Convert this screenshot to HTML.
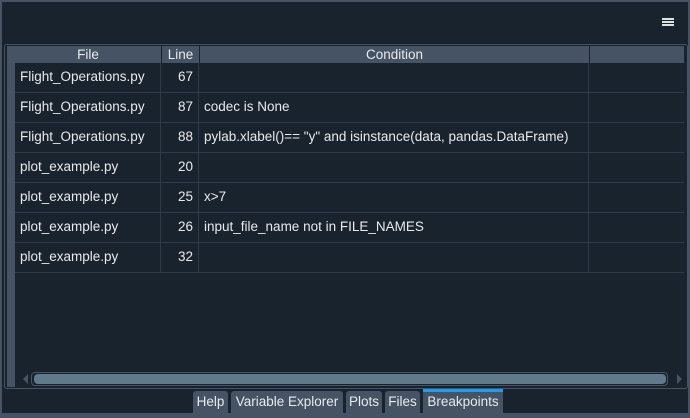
<!DOCTYPE html>
<html><head><style>
*{margin:0;padding:0;box-sizing:border-box}
body{width:690px;height:418px;background:#19232d;font-family:"Liberation Sans",Arial,sans-serif;font-size:13.5px;color:#e8e9eb;position:relative;overflow:hidden}
.ab{position:absolute}
.cell{position:absolute;height:30px;line-height:28px;white-space:nowrap}
.tab{position:absolute;top:391px;height:22px;background:#455364;color:#e8e9eb;border-radius:3px 3px 0 0;line-height:21px;text-align:center;font-size:13.5px;white-space:nowrap}
</style></head><body>
<div class="ab" style="left:0;top:0;width:690px;height:2px;background:#455364"></div>
<div class="ab" style="left:0;top:0;width:2px;height:418px;background:#455364"></div>
<div class="ab" style="right:0;top:0;width:2px;height:418px;background:#455364"></div>
<div class="ab" style="left:0;top:413px;width:690px;height:5px;background:#455364"></div>
<div class="ab" style="left:662px;top:18px;width:12px;height:2px;background:#e0e1e3"></div>
<div class="ab" style="left:662px;top:21px;width:12px;height:2px;background:#e0e1e3"></div>
<div class="ab" style="left:662px;top:24px;width:12px;height:2px;background:#e0e1e3"></div>
<div class="ab" style="left:4px;top:44px;width:684px;height:345px;border:1px solid #455364;border-radius:3px"></div>
<div class="ab" style="left:7px;top:46px;width:8px;height:341px;background:#455364"></div>
<div class="ab" style="left:7px;top:46px;width:677px;height:17px;background:#455364"></div>
<div class="ab" style="left:15px;top:46px;width:146px;height:17px;text-align:center;line-height:17px">File</div>
<div class="ab" style="left:161px;top:46px;width:38px;height:17px;text-align:center;line-height:17px;border-left:1px solid #19232d">Line</div>
<div class="ab" style="left:199px;top:46px;width:390px;height:17px;text-align:center;line-height:17px;border-left:1px solid #19232d">Condition</div>
<div class="ab" style="left:589px;top:46px;width:1px;height:17px;background:#19232d"></div>
<div class="ab" style="left:160px;top:63px;width:1px;height:209px;background:#2d3a48"></div>
<div class="ab" style="left:198px;top:63px;width:1px;height:209px;background:#2d3a48"></div>
<div class="ab" style="left:588px;top:63px;width:1px;height:209px;background:#2d3a48"></div>
<div class="ab" style="left:15px;top:92px;width:669px;height:1px;background:#2d3a48"></div>
<div class="ab" style="left:15px;top:122px;width:669px;height:1px;background:#2d3a48"></div>
<div class="ab" style="left:15px;top:152px;width:669px;height:1px;background:#2d3a48"></div>
<div class="ab" style="left:15px;top:182px;width:669px;height:1px;background:#2d3a48"></div>
<div class="ab" style="left:15px;top:212px;width:669px;height:1px;background:#2d3a48"></div>
<div class="ab" style="left:15px;top:242px;width:669px;height:1px;background:#2d3a48"></div>
<div class="ab" style="left:15px;top:272px;width:669px;height:1px;background:#2d3a48"></div>
<div class="cell" style="left:20px;top:63px">Flight_Operations.py</div><div class="cell" style="left:161px;width:32px;text-align:right;top:63px">67</div>
<div class="cell" style="left:20px;top:93px">Flight_Operations.py</div><div class="cell" style="left:161px;width:32px;text-align:right;top:93px">87</div><div class="cell" style="left:204px;top:93px">codec is None</div>
<div class="cell" style="left:20px;top:123px">Flight_Operations.py</div><div class="cell" style="left:161px;width:32px;text-align:right;top:123px">88</div><div class="cell" style="left:204px;top:123px">pylab.xlabel()== "y" and isinstance(data, pandas.DataFrame)</div>
<div class="cell" style="left:20px;top:153px">plot_example.py</div><div class="cell" style="left:161px;width:32px;text-align:right;top:153px">20</div>
<div class="cell" style="left:20px;top:183px">plot_example.py</div><div class="cell" style="left:161px;width:32px;text-align:right;top:183px">25</div><div class="cell" style="left:204px;top:183px">x&gt;7</div>
<div class="cell" style="left:20px;top:213px">plot_example.py</div><div class="cell" style="left:161px;width:32px;text-align:right;top:213px">26</div><div class="cell" style="left:204px;top:213px">input_file_name not in FILE_NAMES</div>
<div class="cell" style="left:20px;top:243px">plot_example.py</div><div class="cell" style="left:161px;width:32px;text-align:right;top:243px">32</div>
<div class="ab" style="left:23px;top:374px;width:0;height:0;border-top:5px solid transparent;border-bottom:5px solid transparent;border-right:5px solid #455364"></div>
<div class="ab" style="left:31px;top:372px;width:637px;height:14px;border:1px solid #455364;border-radius:4px;background:#19232d"></div>
<div class="ab" style="left:34px;top:374px;width:632px;height:10px;background:#60798b;border-radius:4px"></div>
<div class="ab" style="left:677px;top:374px;width:0;height:0;border-top:5px solid transparent;border-bottom:5px solid transparent;border-left:5px solid #455364"></div>
<div class="tab" style="left:193px;width:35px">Help</div>
<div class="tab" style="left:231px;width:112px">Variable Explorer</div>
<div class="tab" style="left:346px;width:36px">Plots</div>
<div class="tab" style="left:385px;width:35px">Files</div>
<div class="tab" style="left:423px;width:80px;border-radius:0">Breakpoints</div>
<div class="ab" style="left:423px;top:389px;width:80px;height:3px;background:#1a9eec"></div>
</body></html>
